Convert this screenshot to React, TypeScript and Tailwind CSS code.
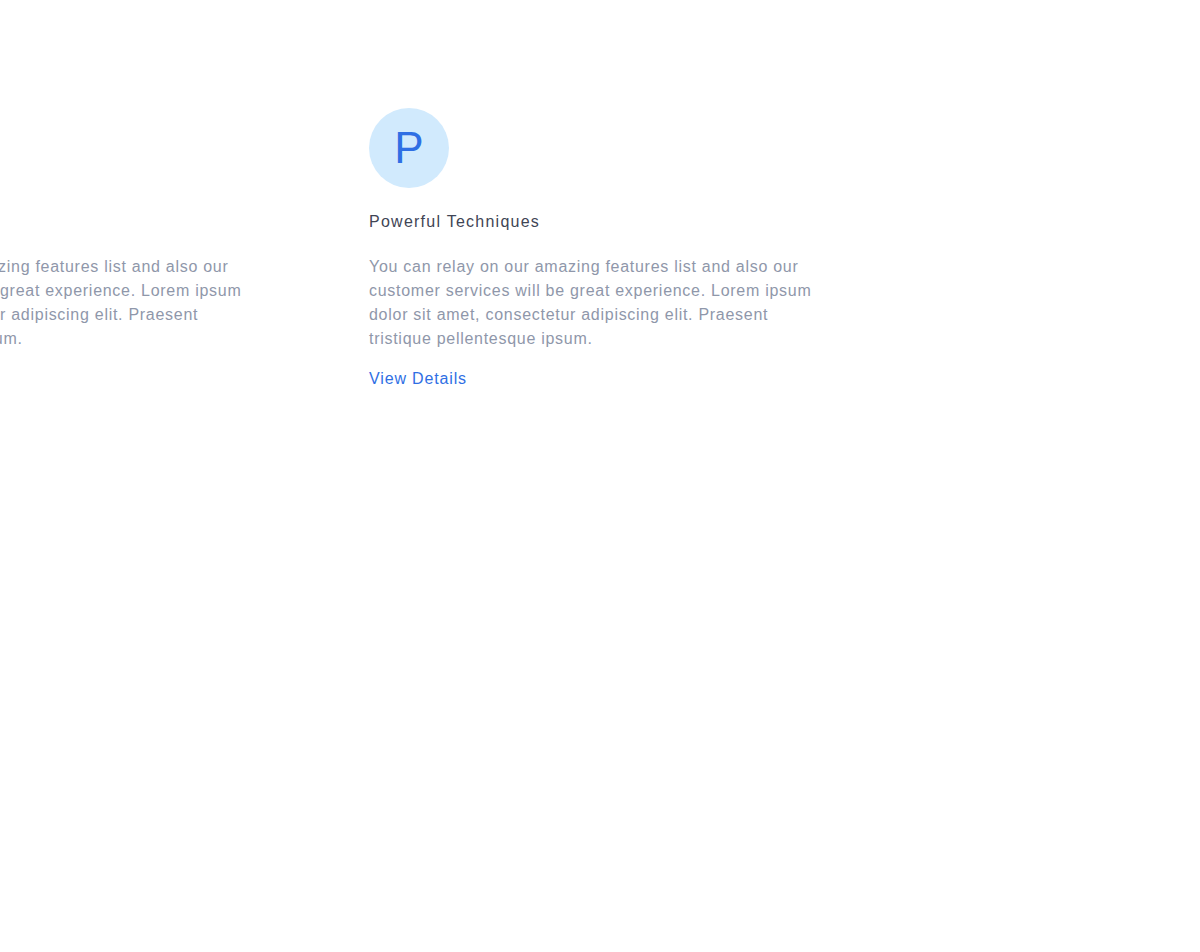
import React from "react";

const text =
  "You can relay on our amazing features list and also our customer services will be great experience. Lorem ipsum dolor sit amet, consectetur adipiscing elit. Praesent tristique pellentesque ipsum.";

function Card() {
  return (
    <div className="w-[450px] shrink-0">
      <div className="flex h-20 w-20 items-center justify-center rounded-full bg-[#d1eafd]">
        <span className="text-[44px] leading-none text-[#2f6fe4]">P</span>
      </div>
      <h3 className="mt-[22px] text-[16px] leading-6 tracking-[1.25px] text-[#3f4555]">Powerful Techniques</h3>
      <p className="mt-[21px] text-[16px] leading-6 tracking-[0.72px] text-[#8f97aa]">{text}</p>
      <a href="#" className="mt-4 block text-[16px] leading-6 tracking-[0.85px] text-[#2f6fe4]">
        View Details
      </a>
    </div>
  );
}

export default function App() {
  return (
    <div className="h-[952px] w-[1200px] overflow-hidden bg-white" style={{ fontFamily: '"Liberation Sans", Arial, sans-serif' }}>
      <div className="ml-[-201px] flex gap-[120px] pt-[108px]">
        <Card />
        <Card />
      </div>
    </div>
  );
}
